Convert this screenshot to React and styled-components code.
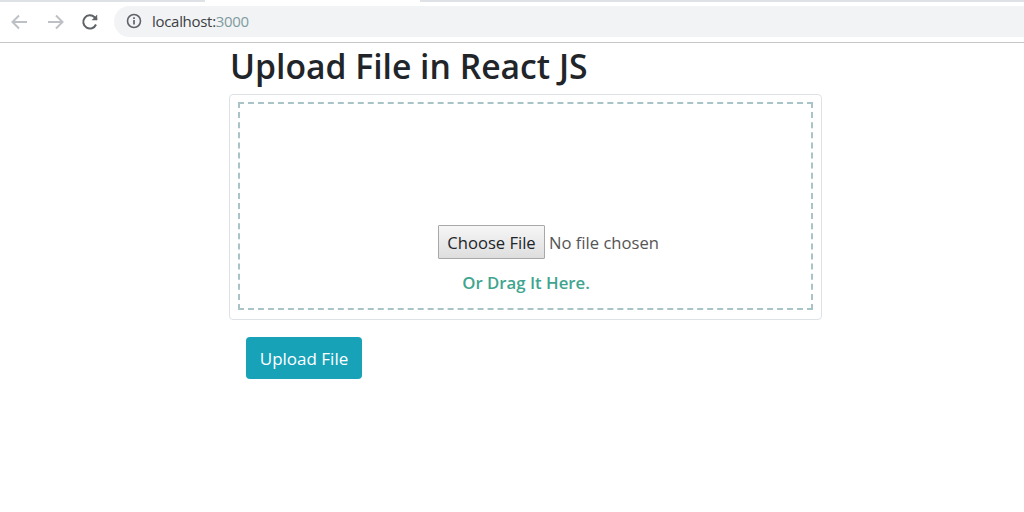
import React from "react";
import styled, { createGlobalStyle } from "styled-components";

const Global = createGlobalStyle`
  html, body { margin: 0; padding: 0; background: #fff; }
  body { width: 1024px; height: 512px; overflow: hidden; font-family: "Open Sans", "Noto Sans", sans-serif; color: #212529; }
`;

const TabStrip = styled.div`
  height: 2px;
  background: #dee1e6;
  padding-left: 205px;
`;
const ActiveTab = styled.div`
  width: 215px;
  height: 2px;
  background: #fff;
`;
const Toolbar = styled.div`
  height: 41px;
  box-sizing: border-box;
  display: flex;
  align-items: flex-start;
  padding: 4px 0 0 9px;
  border-bottom: 1px solid #c4c6c8;
  background: #fff;
`;
const NavIcon = styled.svg`
  width: 22px;
  height: 22px;
  margin: 5px ${p => p.$gap}px 0 0;
  flex: none;
  fill: none;
  stroke: ${p => p.$color};
  stroke-width: 2;
`;
const Omnibox = styled.div`
  flex: 1;
  height: 31px;
  box-sizing: border-box;
  margin-left: 1px;
  border-radius: 16px 0 0 16px;
  background: #f1f3f4;
  display: flex;
  align-items: center;
  padding: 0 0 1px 12px;
  font-size: 15px;
  letter-spacing: -0.3px;
`;
const InfoIcon = styled.svg`
  width: 16px;
  height: 16px;
  margin-right: 10px;
  fill: none;
  stroke: #5f6368;
`;
const Host = styled.span`
  color: #3c4043;
`;
const Port = styled.span`
  color: #7f9ba0;
`;
const Main = styled.main`
  width: 593px;
  margin-left: 229px;
`;
const Title = styled.h1`
  margin: 0;
  padding: 0 0 0 1px;
  font-size: 33.7px;
  line-height: 46px;
  height: 48px;
  box-sizing: border-box;
  font-weight: 600;
`;
const Card = styled.div`
  margin-top: 3px;
  height: 226px;
  box-sizing: border-box;
  border: 1px solid #dee2e6;
  border-radius: 4px;
  padding: 7px 8px 9px;
`;
const DropZone = styled.div`
  height: 100%;
  box-sizing: border-box;
  border: 2px dashed #a9c4c7;
  display: flex;
  flex-direction: column;
  align-items: center;
  justify-content: flex-end;
  padding-bottom: 13px;
`;
const FileInput = styled.input`
  display: block;
  width: 224px;
  margin-left: 49px;
  font-family: "Open Sans", sans-serif;
  font-size: 16.6px;
  color: #555;
  &::file-selector-button {
    width: 107px;
    height: 34px;
    margin-right: 4px;
    padding: 0;
    border: 1px solid #a8a8a8;
    border-radius: 1px;
    background: linear-gradient(#f6f6f6, #dedede);
    color: #212529;
    font: inherit;
  }
`;
const DragHint = styled.p`
  margin: 12px 0 0 1px;
  font-size: 16.8px;
  line-height: 24px;
  font-weight: 600;
  color: #3fa58f;
`;
const UploadButton = styled.button`
  display: block;
  margin: 17px 0 0 17px;
  width: 116px;
  height: 42px;
  padding: 0;
  border: 0;
  border-radius: 4px;
  background: #17a2b8;
  color: #fff;
  font-family: "Open Sans", sans-serif;
  font-size: 17px;
`;

export default function App() {
  return (
    <>
      <Global />
      <TabStrip><ActiveTab /></TabStrip>
      <Toolbar>
        <NavIcon $gap={13} $color="#bdc1c6" viewBox="0 0 22 22"><path d="M18 11H4M10 4.5 3.5 11l6.5 6.5" /></NavIcon>
        <NavIcon $gap={13} $color="#bdc1c6" viewBox="0 0 22 22"><path d="M4 11h14M12 4.5l6.5 6.5-6.5 6.5" /></NavIcon>
        <NavIcon $gap={12} $color="#5f6368" viewBox="0 0 22 22">
          <path d="M17 13.5A6.6 6.6 0 1 1 15.6 6.3L18 8.6" />
          <path d="M18.2 3.6v5.6h-5.6" fill="#5f6368" stroke="none" />
        </NavIcon>
        <Omnibox>
          <InfoIcon viewBox="0 0 16 16">
            <circle cx="8" cy="8" r="6.5" strokeWidth="1.6" />
            <path d="M8 7v4.6M8 4.2v1.7" strokeWidth="1.7" />
          </InfoIcon>
          <Host>localhost:</Host><Port>3000</Port>
        </Omnibox>
      </Toolbar>
      <Main>
        <Title>Upload File in React JS</Title>
        <Card>
          <DropZone>
            <FileInput type="file" />
            <DragHint>Or Drag It Here.</DragHint>
          </DropZone>
        </Card>
        <UploadButton>Upload File</UploadButton>
      </Main>
    </>
  );
}
